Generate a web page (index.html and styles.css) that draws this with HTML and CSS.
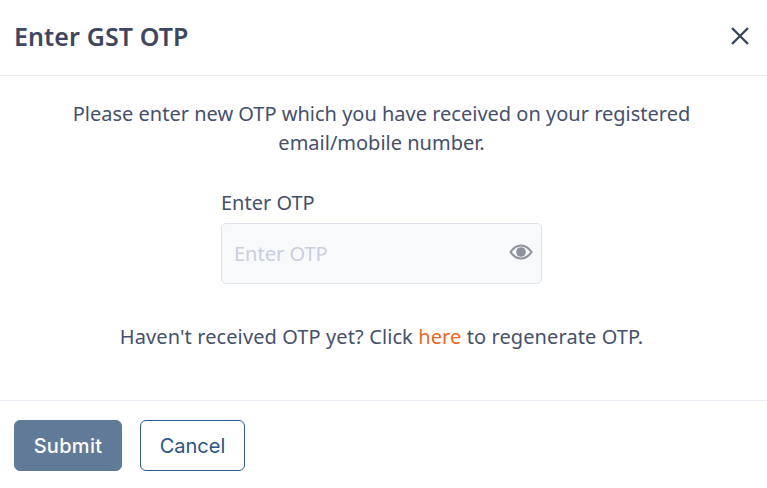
FILE: index.html
```html
<!DOCTYPE html>
<html lang="en">
<head>
<meta charset="utf-8">
<title>Enter GST OTP</title>
<link rel="stylesheet" href="styles.css">
</head>
<body>
<div class="modal">
  <header class="modal-header">
    <h1 class="modal-title">Enter GST OTP</h1>
    <button class="close" type="button" aria-label="Close">
      <svg class="close-icon" viewBox="0 0 20 20" width="20" height="20"><path d="M2 2L18 18M18 2L2 18"/></svg>
    </button>
  </header>
  <main class="modal-body">
    <p class="intro">Please enter new OTP which you have received on your registered<br>email/mobile number.</p>
    <div class="field">
      <label class="label" for="otp">Enter OTP</label>
      <div class="input-wrap">
        <input class="input" id="otp" type="text" placeholder="Enter OTP">
        <svg class="eye" viewBox="0 0 24 16" width="24" height="16"><path class="eye-outline" d="M1.500 8C4.500 3.600 8 1.500 12 1.500S19.500 3.600 22.500 8C19.500 12.400 16 14.500 12 14.500S4.500 12.400 1.500 8Z"/><circle class="eye-pupil" cx="12" cy="8" r="4.800"/></svg>
      </div>
    </div>
    <p class="resend">Haven't received OTP yet? Click <a class="link" href="#">here</a> to regenerate OTP.</p>
  </main>
  <footer class="modal-footer">
    <button class="btn btn-primary" type="button">Submit</button>
    <button class="btn btn-outline" type="button">Cancel</button>
  </footer>
</div>
</body>
</html>
```
FILE: styles.css
```css
* { box-sizing: border-box; }
html, body { margin: 0; padding: 0; background: #fff; }
body { font-family: "Noto Sans", "Liberation Sans", sans-serif; color: #46506a; }
.modal { width: 767px; height: 488px; display: flex; flex-direction: column; }
.modal-header { height: 76px; padding: 0 15px 4px 14px; display: flex; align-items: center; justify-content: space-between; border-bottom: 1px solid #e9ebf3; }
.modal-title { margin: 0; font-size: 25px; font-weight: 600; letter-spacing: 0.1px; color: #3e475f; }
.close { border: 0; background: none; padding: 0; margin-right: 2px; display: flex; }
.close-icon { fill: none; stroke: #3a4560; stroke-width: 2.4; }
.modal-body { height: 324px; padding: 23px 4px 0 0; display: flex; flex-direction: column; align-items: center; }
.intro { margin: 0; text-align: center; font-size: 20px; line-height: 29px; }
.field { width: 321px; margin-top: 32px; }
.label { display: block; font-size: 20px; line-height: 28px; color: #46506a; }
.input-wrap { position: relative; margin-top: 6px; }
.input { width: 100%; height: 61px; padding: 0 40px 0 12px; border: 1px solid #dfe3ec; border-radius: 5px; background: #f8f9fb; font: inherit; font-size: 20px; }
.input::placeholder { color: #c9cfdd; opacity: 1; }
.eye { position: absolute; right: 9px; top: 21px; }
.eye-outline { fill: none; stroke: #8d929c; stroke-width: 2.200; }
.eye-pupil { fill: #8d929c; }
.resend { margin: 39px 0 0; font-size: 20px; line-height: 28px; letter-spacing: 0.1px; }
.link { color: #e8681e; text-decoration: none; }
.modal-footer { border-top: 1px solid #e9ebf3; padding: 19px 14px 0; display: flex; gap: 18px; }
.btn { height: 51px; border-radius: 6px; font-family: Inter, sans-serif; font-size: 20px; }
.btn-primary { width: 108px; background: #617a97; border: 1px solid #617a97; color: #fff; font-weight: 500; letter-spacing: 0.3px; }
.btn-outline { width: 105px; background: #fff; border: 1px solid #2b5a87; color: #2b5580; }
```
